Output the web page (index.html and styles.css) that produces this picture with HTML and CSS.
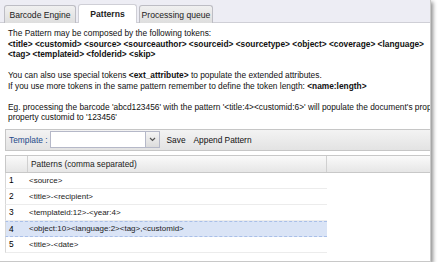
FILE: index.html
```html
<!DOCTYPE html>
<html>
<head>
<meta charset="utf-8">
<link rel="stylesheet" href="styles.css">
</head>
<body>
<div class="panel">
  <div class="tabbar">
    <div class="tab">Barcode Engine</div>
    <div class="tab active">Patterns</div>
    <div class="tab">Processing queue</div>
  </div>
  <div class="content">
    <div class="desc">
      <div class="line">The Pattern may be composed by the following tokens:</div>
      <div class="line b">&lt;title&gt; &lt;customid&gt; &lt;source&gt; &lt;sourceauthor&gt; &lt;sourceid&gt; &lt;sourcetype&gt; &lt;object&gt; &lt;coverage&gt; &lt;language&gt;</div>
      <div class="line b">&lt;tag&gt; &lt;templateid&gt; &lt;folderid&gt; &lt;skip&gt;</div>
      <div class="line">&nbsp;</div>
      <div class="line">You can also use special tokens <b>&lt;ext_attribute&gt;</b> to populate the extended attributes.</div>
      <div class="line">If you use more tokens in the same pattern remember to define the token length: <b>&lt;name:length&gt;</b></div>
      <div class="line">&nbsp;</div>
      <div class="line">Eg. processing the barcode 'abcd123456' with the pattern '&lt;title:4&gt;&lt;customid:6&gt;' will populate the document's property</div>
      <div class="line">property customid to '123456'</div>
    </div>
    <div class="toolbar">
      <span class="label">Template :</span>
      <div class="combo"><div class="combo-input"></div><div class="combo-btn"><svg width="7" height="5" viewBox="0 0 7 5"><path d="M1 1 L3.5 3.5 L6 1" fill="none" stroke="#555" stroke-width="1.2"/></svg></div></div>
      <span class="btn">Save</span>
      <span class="btn">Append Pattern</span>
    </div>
    <div class="grid">
      <div class="ghead">
        <div class="hc num"></div>
        <div class="hc pat">Patterns (comma separated)</div>
        <div class="hc rest"></div>
      </div>
      <div class="row"><div class="num">1</div><div class="pat">&lt;source&gt;</div></div>
      <div class="row"><div class="num">2</div><div class="pat">&lt;title&gt;-&lt;recipient&gt;</div></div>
      <div class="row"><div class="num">3</div><div class="pat">&lt;templateid:12&gt;-&lt;year:4&gt;</div></div>
      <div class="row sel"><div class="num">4</div><div class="pat">&lt;object:10&gt;&lt;language:2&gt;&lt;tag&gt;,&lt;customid&gt;</div></div>
      <div class="row"><div class="num">5</div><div class="pat">&lt;title&gt;-&lt;date&gt;</div></div>
    </div>
  </div>
</div>
</body>
</html>
```
FILE: styles.css
```css
html, body {
  margin: 0;
  padding: 0;
  background: #fff;
}
body {
  font-family: "Liberation Sans", Arial, sans-serif;
  font-size: 8.35px;
  color: #000;
}
.panel {
  width: 431px;
  height: 262px;
  overflow: hidden;
  background: #fff;
  box-shadow: 2px 2px 4px rgba(0,0,0,0.45);
  border-right: 1px solid #c8c8c8;
  border-bottom: 1px solid #c8c8c8;
  box-sizing: border-box;
}
.tabbar {
  height: 23px;
  box-sizing: border-box;
  background: #ededf4;
  border-bottom: 1px solid #cfcfd6;
  display: flex;
  gap: 2px;
  padding: 4px 0 0 4px;
  align-items: flex-end;
}
.tab {
  height: 18px;
  box-sizing: border-box;
  display: flex;
  align-items: center;
  justify-content: center;
  white-space: nowrap;
  border: 1px solid #bdbdc4;
  border-bottom: none;
  border-radius: 3px 3px 0 0;
  background: linear-gradient(#f0f0f0, #dedede);
  font-size: 8.6px;
  color: #222;
  margin-bottom: -1px;
}
.tab:first-child { width: 72px; }
.tab.active {
  background: #fff;
  font-weight: bold;
  height: 19px;
  width: 59px;
  border-color: #cfcfd6;
}
.tab:last-child { width: 74px; }
.content {
  padding: 5px 0 0 5px;
}
.desc {
  padding-left: 3px;
}
.line {
  line-height: 10.5px;
  white-space: nowrap;
  color: #111;
}
.line.b { font-weight: bold; }
.toolbar {
  margin-top: 6px;
  height: 22px;
  box-sizing: border-box;
  border: 1px solid #c6c6c6;
  border-right: none;
  background: linear-gradient(#f3f3f3, #e3e3e3);
  display: flex;
  align-items: center;
  padding-left: 3px;
}
.label {
  color: #1d4a8a;
  margin-right: 2px;
}
.combo {
  display: flex;
  height: 17px;
  width: 110px;
  margin-right: 4px;
}
.combo-input {
  flex: 1;
  background: #fff;
  border: 1px solid #b5b8c8;
  border-right: none;
}
.combo-btn {
  width: 15px;
  box-sizing: border-box;
  border: 1px solid #b5b8c8;
  background: linear-gradient(#f4f4f4, #dcdcdc);
  display: flex;
  align-items: center;
  justify-content: center;
}
.btn {
  margin: 0 2px 0 0;
  padding: 0 3px;
  color: #111;
}
.grid {
  margin-top: 4px;
}
.ghead {
  display: flex;
  height: 18px;
  box-sizing: border-box;
  border: 1px solid #c8c8c8;
  border-right: none;
  background: linear-gradient(#fafafa, #e6e6e6);
}
.hc {
  display: flex;
  align-items: center;
  border-right: 1px solid #d0d0d0;
  color: #222;
}
.hc.num { width: 21px; }
.hc.pat { width: 299px; padding-left: 3px; box-sizing: border-box; }
.hc.rest { flex: 1; border-right: none; }
.row {
  display: flex;
  height: 16px;
  width: 322px;
  box-sizing: border-box;
  border-bottom: 1px solid #ececec;
  align-items: center;
  border-left: 1px solid #d8d8d8;
}
.row:first-of-type { margin-top: 1px; }
.row .num { width: 21px; padding-left: 3px; box-sizing: border-box; }
.row .pat { flex: 1; padding-left: 2px; font-size: 8px; color: #222; }
.row.sel {
  background: #dae4f6;
  border-top: 1px dashed #a9bfe8;
  border-bottom: 1px dashed #a9bfe8;
}
```
